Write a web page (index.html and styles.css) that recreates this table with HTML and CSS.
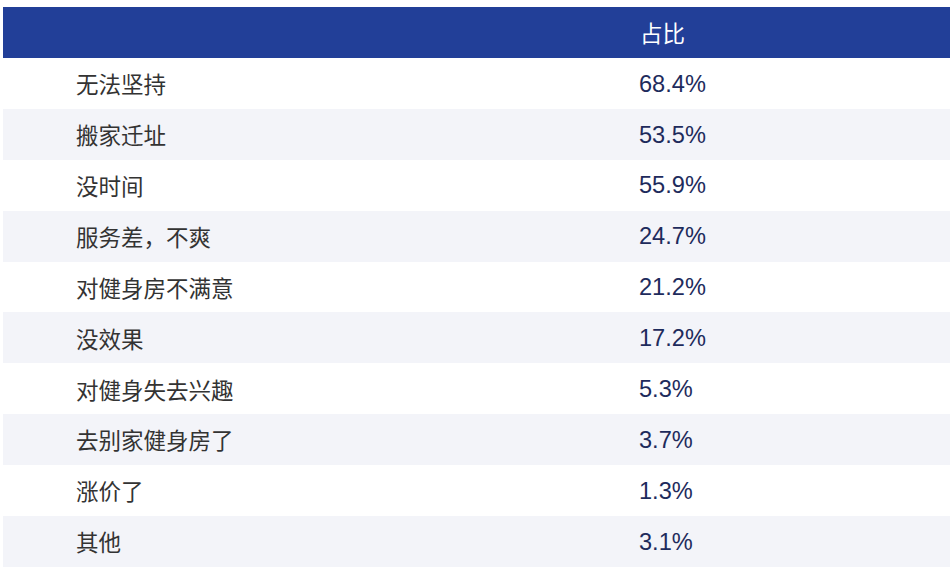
FILE: index.html
```html
<!DOCTYPE html>
<html lang="zh">
<head>
<meta charset="utf-8">
<title>占比</title>
<link rel="stylesheet" href="styles.css">
</head>
<body>
<div class="table">
  <div class="row head"><div class="cell"></div><div class="cell">占比</div></div>
  <div class="row"><div class="cell name">无法坚持</div><div class="cell num">68.4%</div></div>
  <div class="row alt"><div class="cell name">搬家迁址</div><div class="cell num">53.5%</div></div>
  <div class="row"><div class="cell name">没时间</div><div class="cell num">55.9%</div></div>
  <div class="row alt"><div class="cell name">服务差，不爽</div><div class="cell num">24.7%</div></div>
  <div class="row"><div class="cell name">对健身房不满意</div><div class="cell num">21.2%</div></div>
  <div class="row alt"><div class="cell name">没效果</div><div class="cell num">17.2%</div></div>
  <div class="row"><div class="cell name">对健身失去兴趣</div><div class="cell num">5.3%</div></div>
  <div class="row alt"><div class="cell name">去别家健身房了</div><div class="cell num">3.7%</div></div>
  <div class="row"><div class="cell name">涨价了</div><div class="cell num">1.3%</div></div>
  <div class="row alt"><div class="cell name">其他</div><div class="cell num">3.1%</div></div>
</div>
</body>
</html>
```
FILE: styles.css
```css
html, body {
  margin: 0;
  padding: 0;
  background: #ffffff;
}
body {
  padding: 7px 2px 0 3px;
  font-family: "Liberation Sans", "Noto Sans CJK SC", sans-serif;
  font-size: 22.5px;
}
.table {
  width: 947px;
  display: flex;
  flex-direction: column;
}
.row {
  display: grid;
  grid-template-columns: 563px 1fr;
  height: 50.9px;
  align-items: center;
  background: #ffffff;
}
.row.alt {
  background: #f3f4f9;
}
.row.head {
  background: #223f98;
  color: #ffffff;
  height: 51px;
}
.cell {
  padding-left: 73px;
  line-height: 1;
}
.head .cell {
  font-family: "Noto Sans CJK SC", sans-serif;
  padding-left: 74px;
}
.name {
  font-family: "Noto Sans CJK SC", sans-serif;
  color: #333333;
}
.num {
  color: #1e2b5c;
  font-size: 23.6px;
  padding-top: 2px;
}
```
